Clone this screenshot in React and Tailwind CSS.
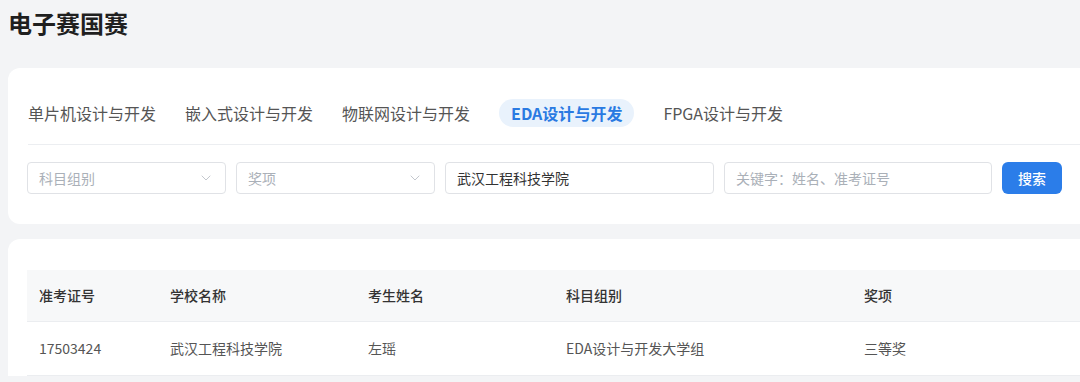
import React, { useState } from 'react';
import { ChevronDown } from 'lucide-react';

const tabs = ['单片机设计与开发', '嵌入式设计与开发', '物联网设计与开发', 'EDA设计与开发', 'FPGA设计与开发'];

const rows = [
  { id: '17503424', school: '武汉工程科技学院', name: '左瑶', group: 'EDA设计与开发大学组', award: '三等奖' },
];

const App = () => {
  const [active, setActive] = useState(3);

  return (
    <div className="min-h-screen bg-[#f3f4f6] pl-2 font-['Noto_Sans_CJK_SC','Noto_Sans',sans-serif] overflow-hidden">
      <h1 className="pt-[7px] h-[68px] text-[24px] leading-[32px] font-bold text-[#1f1f1f]">电子赛国赛</h1>

      <div className="bg-white rounded-l-xl pl-5 pt-[29px] pb-[30px] w-[1090px]">
        <div className="flex items-center gap-[29px] h-[32px] mb-[15px]">
          {tabs.map((t, i) => (
            <button
              key={t}
              onClick={() => setActive(i)}
              className={`text-[16px] leading-[28px] whitespace-nowrap ${
                i === active
                  ? 'bg-[#e9f2fc] text-[#2a7ae2] font-bold rounded-full px-[12px]'
                  : 'text-[#555]'
              }`}
            >
              {t}
            </button>
          ))}
        </div>
        <div className="border-t border-[#eceef1]" />

        <div className="flex items-center gap-[10px] mt-[17px] -ml-px">
          {['科目组别', '奖项'].map(p => (
            <div key={p} className="w-[199px] h-[32px] border border-[#e0e2e6] rounded flex items-center justify-between px-[11px] text-[14px] text-[#aab0b8]">
              <span>{p}</span>
              <ChevronDown className="w-4 h-4 text-[#c4c8ce]" strokeWidth={1.5} />
            </div>
          ))}
          <div className="w-[269px] h-[32px] border border-[#e0e2e6] rounded flex items-center px-[11px] text-[14px] text-[#333]">
            武汉工程科技学院
          </div>
          <div className="w-[268px] h-[32px] border border-[#e0e2e6] rounded flex items-center px-[11px] text-[14px] text-[#aab0b8]">
            关键字：姓名、准考证号
          </div>
          <button className="w-[60px] h-[32px] rounded-md bg-[#2b7de9] text-white text-[14px] font-medium">搜索</button>
        </div>
      </div>

      <div className="bg-white rounded-tl-xl mt-[15px] pl-[19px] pt-[31px] w-[1090px]">
        <div className="flex items-center h-[52px] bg-[#f7f8f9] text-[14px] text-[#333] font-medium border-b border-[#ebedf0]">
          <div className="w-[143px] pl-[12px]">准考证号</div>
          <div className="w-[198px]">学校名称</div>
          <div className="w-[198px]">考生姓名</div>
          <div className="w-[298px]">科目组别</div>
          <div className="flex-1">奖项</div>
        </div>
        {rows.map(r => (
          <div key={r.id} className="flex items-center h-[54px] text-[14px] text-[#555] border-b border-[#ebedf0]">
            <div className="w-[143px] pl-[12px]">{r.id}</div>
            <div className="w-[198px]">{r.school}</div>
            <div className="w-[198px]">{r.name}</div>
            <div className="w-[298px]">{r.group}</div>
            <div className="flex-1">{r.award}</div>
          </div>
        ))}
      </div>
    </div>
  );
};

export default App;
